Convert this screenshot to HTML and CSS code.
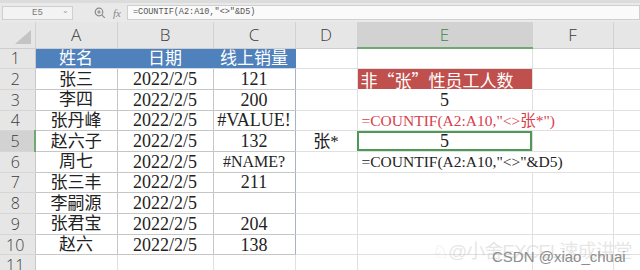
FILE: index.html
```html
<!DOCTYPE html>
<html lang="zh-CN">
<head>
    <meta charset="UTF-8">
    <title>COUNTIF 非张姓</title>
    <link rel="stylesheet" href="styles.css">
</head>
<body>
    <div class="formula-bar">
        <div class="name-box"><span class="name">E5</span><span class="caret">&#8964;</span></div>
        <svg class="zoom-ico" width="12" height="12" viewBox="0 0 12 12">
            <circle cx="5" cy="5" r="3.8" fill="none" stroke="#8a8a8a" stroke-width="1.2"/>
            <path d="M3.2 5h3.6M5 3.2v3.6M7.8 7.8l3 3" stroke="#8a8a8a" stroke-width="1.2" fill="none"/>
        </svg>
        <span class="fx">fx</span>
        <div class="formula-input">=COUNTIF(A2:A10,"&lt;&gt;"&amp;D5)</div>
    </div>

    <table class="sheet">
        <colgroup>
            <col class="c-row"><col class="c-a"><col class="c-b"><col class="c-c">
            <col class="c-d"><col class="c-e"><col class="c-f"><col class="c-g">
        </colgroup>
        <thead>
            <tr>
                <th class="corner"><svg width="16" height="14" viewBox="0 0 16 14"><polygon points="16,0 16,14 0,14" fill="#c4c4c4"/></svg></th>
                <th>A</th><th>B</th><th>C</th><th>D</th><th class="sel">E</th><th>F</th><th></th>
            </tr>
        </thead>
        <tbody>
            <tr><th>1</th><td class="hd">姓名</td><td class="hd">日期</td><td class="hd last">线上销量</td><td></td><td></td><td></td><td></td></tr>
            <tr><th>2</th><td class="t">张三</td><td class="t num">2022/2/5</td><td class="t num last">121</td><td></td><td class="red-box">非“张”性员工人数</td><td></td><td></td></tr>
            <tr><th>3</th><td class="t">李四</td><td class="t num">2022/2/5</td><td class="t num last">200</td><td></td><td class="num">5</td><td></td><td></td></tr>
            <tr><th>4</th><td class="t">张丹峰</td><td class="t num">2022/2/5</td><td class="t num last">#VALUE!</td><td></td><td class="fml red">=COUNTIF(A2:A10,"&lt;&gt;张*")</td><td></td><td></td></tr>
            <tr><th class="sel">5</th><td class="t">赵六子</td><td class="t num">2022/2/5</td><td class="t num last">132</td><td>张*</td><td class="num active">5</td><td></td><td></td></tr>
            <tr><th>6</th><td class="t">周七</td><td class="t num">2022/2/5</td><td class="t num last err">#NAME?</td><td></td><td class="fml">=COUNTIF(A2:A10,"&lt;&gt;"&amp;D5)</td><td></td><td></td></tr>
            <tr><th>7</th><td class="t">张三丰</td><td class="t num">2022/2/5</td><td class="t num last">211</td><td></td><td></td><td></td><td></td></tr>
            <tr><th>8</th><td class="t">李嗣源</td><td class="t num">2022/2/5</td><td class="t num last"></td><td></td><td></td><td></td><td></td></tr>
            <tr><th>9</th><td class="t">张君宝</td><td class="t num">2022/2/5</td><td class="t num last">204</td><td></td><td></td><td></td><td></td></tr>
            <tr><th>10</th><td class="t">赵六</td><td class="t num">2022/2/5</td><td class="t num last">138</td><td></td><td></td><td></td><td></td></tr>
            <tr><th>11</th><td></td><td></td><td></td><td></td><td></td><td></td><td></td></tr>
        </tbody>
    </table>

    <div class="mark-back">&#9816;@小舍EXCEL速成讲堂</div>
    <div class="mark">CSDN @xiao_chuai</div>
</body>
</html>
```

FILE: styles.css
```css
* { box-sizing: border-box; }
body { margin: 0; width: 640px; height: 270px; overflow: hidden; background: #fff; position: relative; font-family: "Liberation Sans", "Noto Sans CJK SC", sans-serif; }

/* formula bar */
.formula-bar { height: 22px; background: #e9e9e9; border-top: 3px solid #dcdcdc; display: flex; align-items: center; padding-left: 2px; }
.name-box { width: 71px; height: 14px; background: #f3f3f3; border: 1px solid #cfcfcf; display: flex; align-items: center; justify-content: center; position: relative; }
.name-box .name { font-size: 9px; color: #777; font-family: "Liberation Mono", monospace; }
.name-box .caret { position: absolute; right: 3px; top: -1px; font-size: 8px; color: #999; }
.zoom-ico { margin-left: 21px; }
.fx { font-family: "Liberation Serif", serif; font-style: italic; font-size: 11px; color: #888; margin-left: 7px; }
.formula-input { flex: 1; height: 15px; margin-left: 6px; background: #fafafa; border: 1px solid #cfcfcf; font-family: "Liberation Mono", monospace; font-size: 8.5px; color: #555; padding-left: 5px; line-height: 13px; }

/* sheet */
.sheet { border-collapse: collapse; table-layout: fixed; width: 640px; }
.c-row { width: 35px; } .c-a { width: 82px; } .c-b { width: 96px; } .c-c { width: 82px; }
.c-d { width: 62px; } .c-e { width: 175px; } .c-f { width: 81px; } .c-g { width: 27px; }

.sheet thead th { height: 26px; background: #e6e6e6; border-right: 1px solid #d2d2d2; border-bottom: 1px solid #cdcdcd; font-family: "Open Sans", sans-serif; font-weight: 300; font-size: 17px; color: #3c3c3c; padding: 0; }
.sheet thead th.corner { text-align: right; vertical-align: bottom; padding: 0 4px 4px 0; }
.sheet thead th.corner svg { display: block; margin-left: auto; }
.sheet thead th.sel { background: #d2d2d2; color: #3b8a45; border-bottom: 2px solid #6fa873; }

.sheet tbody tr { height: 20.7px; }
.sheet tbody th { background: #e6e6e6; border-right: 1px solid #c8c8c8; border-bottom: 1px solid #d6d6d6; font-family: "Open Sans", sans-serif; font-weight: 300; font-size: 16px; color: #3c3c3c; padding: 0 4px 0 0; line-height: 1; }
.sheet tbody th.sel { background: #d2d2d2; border-right: 2px solid #6fa873; }

.sheet td { border-right: 1px solid #e0e0e0; border-bottom: 1px solid #e0e0e0; padding: 0; text-align: center; white-space: nowrap; line-height: 1; font-family: "Liberation Serif", "Noto Sans CJK SC", serif; font-size: 17px; color: #222; }
.sheet td.t { border-right-color: #c6c6c6; border-bottom-color: #c6c6c6; }
.sheet td.last { border-right-color: #a9b2c2; }
.sheet td.hd { background: #4f81bd; color: #fff; border-right-color: #4f81bd; border-bottom-color: #d0d8e4; }
.sheet td.num { font-size: 18px; }
.sheet td.err { font-size: 16px; }
.sheet td.red-box { background: #c0504d; color: #fff; text-align: left; padding-left: 3px; border-bottom-color: #fff; font-family: "Noto Sans CJK SC", sans-serif; }
.sheet td.fml { font-size: 15.5px; text-align: left; padding-left: 4px; border-right-color: transparent; }
.sheet td.red { color: #d6404a; }
.sheet td.active { outline: 2px solid #4c9a55; outline-offset: -2px; }

/* watermark */
.mark-back { position: absolute; left: 432px; top: 236px; font-size: 19px; color: rgba(200, 200, 200, 0.45); white-space: nowrap; letter-spacing: -1px; }
.mark { position: absolute; left: 492px; top: 248px; font-size: 15px; color: #8c8c8c; white-space: nowrap; font-family: "Liberation Sans", sans-serif; }
```
